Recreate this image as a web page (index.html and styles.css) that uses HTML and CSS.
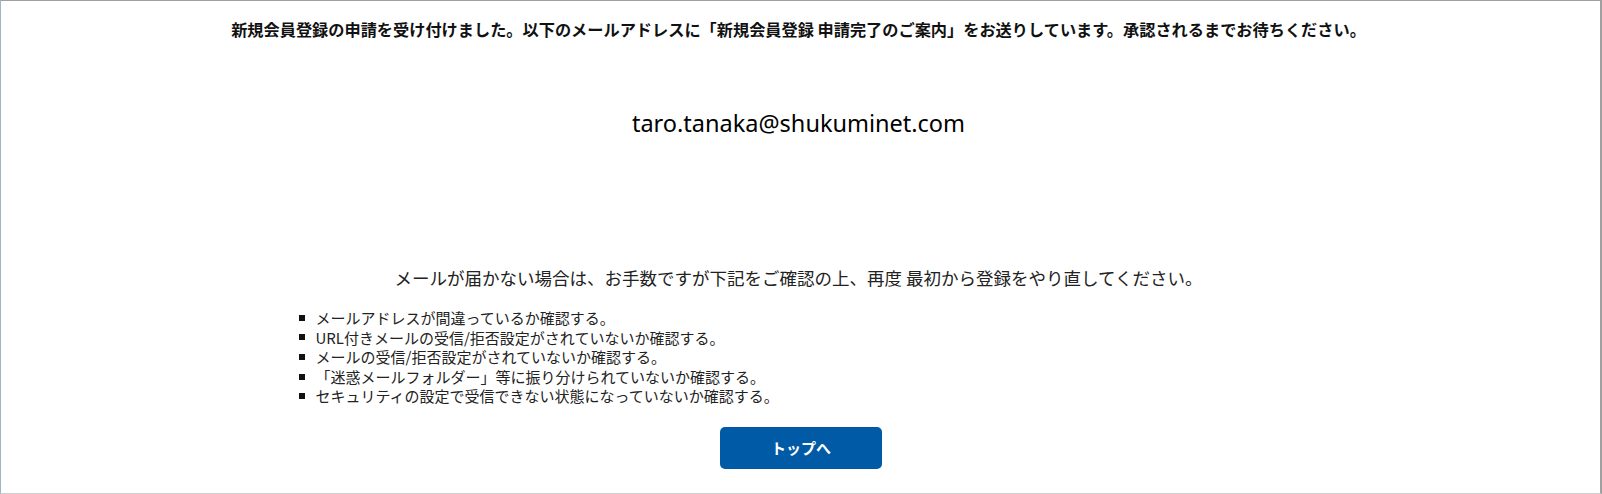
FILE: index.html
```html
<!DOCTYPE html>
<html lang="ja">
<head>
<meta charset="utf-8">
<title>申請完了</title>
<link rel="stylesheet" href="styles.css">
</head>
<body>
<div class="frame">
  <p class="lead">新規会員登録の申請を受け付けました。以下のメールアドレスに「新規会員登録 申請完了のご案内」をお送りしています。承認されるまでお待ちください。</p>
  <p class="email">taro.tanaka@shukuminet.com</p>
  <div class="notice">
    <p class="notice-title">メールが届かない場合は、お手数ですが下記をご確認の上、再度 最初から登録をやり直してください。</p>
    <ul class="checklist">
      <li>メールアドレスが間違っているか確認する。</li>
      <li>URL付きメールの受信/拒否設定がされていないか確認する。</li>
      <li>メールの受信/拒否設定がされていないか確認する。</li>
      <li>「迷惑メールフォルダー」等に振り分けられていないか確認する。</li>
      <li>セキュリティの設定で受信できない状態になっていないか確認する。</li>
    </ul>
  </div>
  <div class="actions">
    <a class="btn-top" href="#">トップへ</a>
  </div>
</div>
</body>
</html>
```
FILE: styles.css
```css
* { box-sizing: border-box; }
html, body { margin: 0; padding: 0; background: #fff; }
body {
  font-family: "Noto Sans CJK JP", "Noto Sans", sans-serif;
  color: #111;
  width: 1602px;
  height: 494px;
  overflow: hidden;
}
.frame {
  width: 1602px;
  height: 494px;
  border-top: 1px solid #a0a0a0;
  border-left: 1px solid #9fb7bf;
  border-right: 2px solid #a0a0a0;
  border-bottom: 1px solid #cfcfcf;
  display: flex;
  flex-direction: column;
  align-items: center;
  padding-right: 4px;
}
.lead {
  margin: 16px 0 0;
  font-size: 16.2px;
  font-weight: 700;
  line-height: 24px;
  text-align: center;
}
.email {
  margin: 66px 0 0;
  font-family: "Noto Sans", sans-serif;
  font-size: 23.5px;
  line-height: 32px;
  text-align: center;
  color: #000;
}
.notice {
  width: 1000px;
  margin-top: 127px;
}
.notice-title {
  margin: 0;
  font-size: 17.5px;
  line-height: 24px;
  text-align: center;
  color: #222;
}
.checklist {
  list-style: none;
  margin: 18px 0 0;
  padding: 0;
}
.checklist li {
  display: flex;
  align-items: center;
  font-size: 15px;
  line-height: 19.6px;
  color: #222;
}
.checklist li::before {
  content: "";
  width: 6px;
  height: 6px;
  background: #111;
  margin: 0 11px 0 0;
  flex: none;
}
.actions {
  margin-top: 21px;
  margin-left: 5px;
}
.btn-top {
  display: flex;
  align-items: center;
  justify-content: center;
  width: 162px;
  height: 42px;
  background: #005aa5;
  border-radius: 5px;
  color: #fff;
  text-decoration: none;
  font-size: 15px;
  font-weight: 700;
}
```
